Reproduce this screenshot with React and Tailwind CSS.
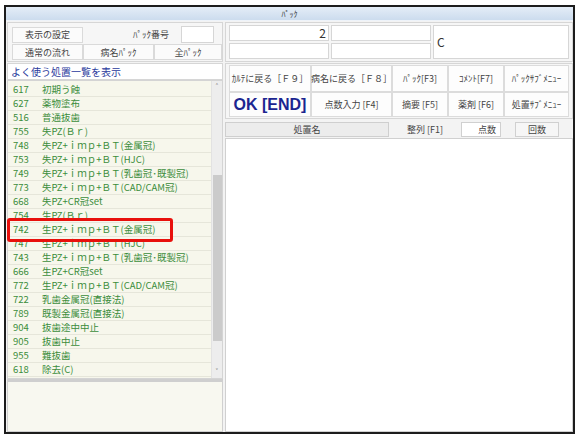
import React from "react";

const items = [
  ["617", "初期う蝕"],
  ["627", "薬物塗布"],
  ["516", "普通抜歯"],
  ["755", "失PZ(Ｂｒ)"],
  ["748", "失PZ+ｉｍｐ+ＢＴ(金属冠)"],
  ["753", "失PZ+ｉｍｐ+ＢＴ(HJC)"],
  ["749", "失PZ+ｉｍｐ+ＢＴ(乳歯冠･既製冠)"],
  ["773", "失PZ+ｉｍｐ+ＢＴ(CAD/CAM冠)"],
  ["668", "失PZ+CR冠set"],
  ["754", "生PZ(Ｂｒ)"],
  ["742", "生PZ+ｉｍｐ+ＢＴ(金属冠)"],
  ["747", "生PZ+ｉｍｐ+ＢＴ(HJC)"],
  ["743", "生PZ+ｉｍｐ+ＢＴ(乳歯冠･既製冠)"],
  ["666", "生PZ+CR冠set"],
  ["772", "生PZ+ｉｍｐ+ＢＴ(CAD/CAM冠)"],
  ["722", "乳歯金属冠(直接法)"],
  ["789", "既製金属冠(直接法)"],
  ["904", "抜歯途中中止"],
  ["905", "抜歯中止"],
  ["955", "難抜歯"],
  ["618", "除去(C)"],
];

const font = { fontFamily: '"Noto Sans CJK JP", "Noto Sans", sans-serif' };

function Btn({ w, children }) {
  return (
    <div
      className={`${w} h-[16px] flex items-center justify-center bg-[#fbfbfb] border border-[#dadada] text-[9px] text-[#444] leading-none`}
    >
      {children}
    </div>
  );
}

function FBtn({ w, h, children, big }) {
  return (
    <div
      className={`${w} ${h} flex items-center justify-center bg-[#fdfdfd] border border-[#dcdcdc] leading-none whitespace-nowrap ${
        big ? "" : "text-[9px] text-[#444]"
      }`}
    >
      {children}
    </div>
  );
}

export default function App() {
  return (
    <div className="w-[580px] h-[441px] bg-white pt-[5px] pl-[4px]" style={font}>
      <div className="w-[571px] h-[429px] border-2 border-[#1c1c1c] flex flex-col bg-[#f3f3f3]">
        {/* title */}
        <div className="h-[14px] bg-gradient-to-b from-[#e4edf7] to-[#ccdcee] border-b border-[#eef3f9] flex items-center justify-center text-[8px] text-[#333] leading-none">
          ﾊﾟｯｸ
        </div>

        <div className="flex-1 flex pl-[1px] pt-[1px] gap-[2px]">
          {/* left column */}
          <div className="w-[216px] flex flex-col">
            <div className="h-[40px] border border-[#d6d6d6] bg-[#f6f6f6] pl-[4px] pt-[3px] flex flex-col gap-[1px]">
              <div className="flex items-center h-[17px]">
                <Btn w="w-[71px]">表示の設定</Btn>
                <div className="flex-1 text-right pr-[12px] text-[9px] text-[#444] leading-none">ﾊﾟｯｸ番号</div>
                <div className="w-[33px] h-[17px] bg-white border border-[#d6d6d6] mr-[8px]"></div>
              </div>
              <div className="flex">
                <Btn w="w-[71px]">通常の流れ</Btn>
                <Btn w="w-[71px]">病名ﾊﾟｯｸ</Btn>
                <Btn w="w-[68px]">全ﾊﾟｯｸ</Btn>
              </div>
            </div>
            <div className="h-[17px] mt-[1px] bg-white border border-[#d6d6d6] flex items-center pl-[3px] text-[10px] text-[#2a3a9c] leading-none">
              よく使う処置一覧を表示
            </div>
            <div className="relative h-[299px] border border-[#d4d4d4] bg-[#f7f7ec] flex">
              <div className="flex-1 pt-[2px]">
                {items.map(([no, name]) => (
                  <div
                    key={no + name}
                    className="h-[14px] flex items-center border-b border-[#e6e6da] text-[9.5px] text-[#3b8d3b] leading-none whitespace-nowrap"
                  >
                    <span className="w-[34px] pl-[5px]">{no}</span>
                    <span>{name}</span>
                  </div>
                ))}
              </div>
              <div className="w-[11px] bg-[#ededed] border-l border-[#e2e2e2] flex flex-col items-center">
                <div className="h-[12px] flex items-center justify-center text-[8px] text-[#666] leading-none">˄</div>
                <div className="h-[82px]"></div>
                <div className="w-[9px] h-[166px] bg-[#cbcbcb]"></div>
                <div className="flex-1"></div>
                <div className="h-[12px] flex items-center justify-center text-[8px] text-[#666] leading-none">˅</div>
              </div>
              <div className="absolute left-[-1px] top-[137px] w-[166px] h-[24px] border-[3px] border-[#e8100c] rounded-[3px]"></div>
            </div>
            <div className="flex-1 border border-[#d0d0d0] border-t-[3px] border-t-[#cfcfcf] bg-[#f8f8f0]"></div>
          </div>

          {/* right column */}
          <div className="flex-1 flex flex-col">
            <div className="h-[40px] border border-[#d6d6d6] bg-[#f6f6f6] pl-[3px] pt-[2px] flex gap-[2px]">
              <div className="flex flex-col gap-[2px]">
                <div className="w-[100px] h-[16px] bg-white border border-[#d6d6d6] text-right pr-[2px] text-[12px] leading-[14px] text-[#333]">2</div>
                <div className="w-[100px] h-[16px] bg-white border border-[#d6d6d6]"></div>
              </div>
              <div className="flex flex-col gap-[2px]">
                <div className="w-[100px] h-[16px] bg-white border border-[#d6d6d6]"></div>
                <div className="w-[100px] h-[16px] bg-white border border-[#d6d6d6]"></div>
              </div>
              <div className="w-[136px] h-[34px] bg-white border border-[#d6d6d6] flex items-center pl-[3px] text-[12px] text-[#333]">C</div>
            </div>
            <div className="h-[56px] mt-[1px] border border-[#d6d6d6] bg-[#f6f6f6] pl-[3px] pt-[1px] flex flex-col">
              <div className="flex">
                <FBtn w="w-[82px]" h="h-[27px]">ｶﾙﾃに戻る［Ｆ９］</FBtn>
                <FBtn w="w-[81px]" h="h-[27px]">病名に戻る［Ｆ８］</FBtn>
                <FBtn w="w-[56px]" h="h-[27px]">ﾊﾟｯｸ[F3]</FBtn>
                <FBtn w="w-[56px]" h="h-[27px]">ｺﾒﾝﾄ[F7]</FBtn>
                <FBtn w="w-[65px]" h="h-[27px]">ﾊﾟｯｸｻﾌﾞﾒﾆｭｰ</FBtn>
              </div>
              <div className="flex">
                <FBtn w="w-[82px]" h="h-[25px]" big>
                  <span className="text-[16px] font-bold text-[#1b2590]" style={{ fontFamily: '"Liberation Sans", Arial, sans-serif' }}>
                    OK [END]
                  </span>
                </FBtn>
                <FBtn w="w-[81px]" h="h-[25px]">点数入力 [F4]</FBtn>
                <FBtn w="w-[56px]" h="h-[25px]">摘要 [F5]</FBtn>
                <FBtn w="w-[56px]" h="h-[25px]">薬剤 [F6]</FBtn>
                <FBtn w="w-[65px]" h="h-[25px]">処置ｻﾌﾞﾒﾆｭｰ</FBtn>
              </div>
            </div>
            <div className="h-[16px] mt-[2px] flex items-center text-[9px] text-[#444] leading-none">
              <div className="w-[164px] h-[15px] bg-[#ececec] border border-[#cfcfcf] flex items-center justify-center">処置名</div>
              <div className="w-[72px] text-center">整列 [F1]</div>
              <div className="w-[40px] h-[15px] bg-white border border-[#d0d0d0] flex items-center justify-end pr-[4px]">点数</div>
              <div className="w-[14px]"></div>
              <div className="w-[44px] h-[15px] bg-[#f6f6f6] border border-[#d0d0d0] flex items-center justify-center">回数</div>
            </div>
            <div className="flex-1 mt-[1px] bg-white border border-[#d0d0d0]"></div>
          </div>
        </div>
      </div>
    </div>
  );
}
